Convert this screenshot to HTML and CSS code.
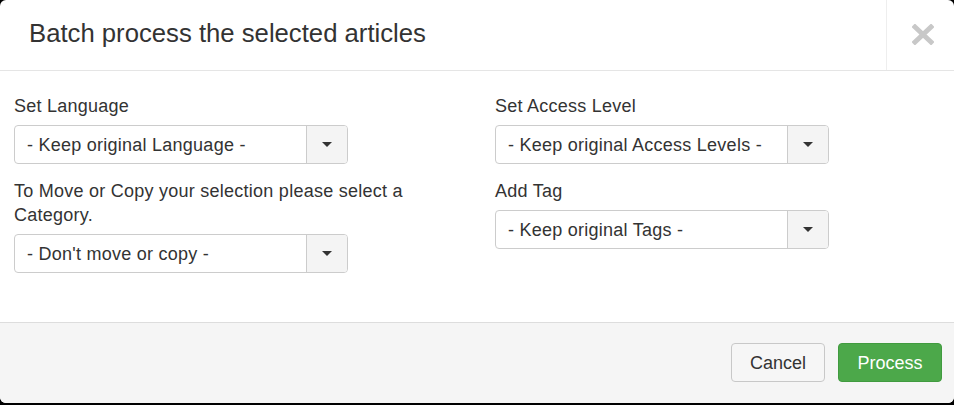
FILE: index.html
```html
<!DOCTYPE html>
<html>
<head>
<meta charset="utf-8">
<link rel="stylesheet" href="styles.css">
</head>
<body>
<div class="modal">
  <div class="modal-header">
    <h3 class="title">Batch process the selected articles</h3>
    <div class="close">
      <svg width="22" height="21" viewBox="0 0 22 21"><path d="M3 3 L19 18 M19 3 L3 18" stroke="#c8c8c8" stroke-width="5" stroke-linecap="square" fill="none"/></svg>
    </div>
  </div>
  <div class="modal-body">
    <div class="col">
      <div class="field">
        <label class="label">Set Language</label>
        <div class="select"><span class="select-text">- Keep original Language -</span><span class="select-arrow"><i class="caret"></i></span></div>
      </div>
      <div class="field">
        <label class="label">To Move or Copy your selection please select a Category.</label>
        <div class="select"><span class="select-text">- Don't move or copy -</span><span class="select-arrow"><i class="caret"></i></span></div>
      </div>
    </div>
    <div class="col">
      <div class="field">
        <label class="label">Set Access Level</label>
        <div class="select"><span class="select-text">- Keep original Access Levels -</span><span class="select-arrow"><i class="caret"></i></span></div>
      </div>
      <div class="field">
        <label class="label">Add Tag</label>
        <div class="select"><span class="select-text">- Keep original Tags -</span><span class="select-arrow"><i class="caret"></i></span></div>
      </div>
    </div>
  </div>
  <div class="modal-footer">
    <button class="btn btn-default">Cancel</button>
    <button class="btn btn-success">Process</button>
  </div>
</div>
</body>
</html>
```

FILE: styles.css
```css
html, body {
  margin: 0;
  padding: 0;
  background: #000;
  height: 405px;
  overflow: hidden;
}
body {
  font-family: "Liberation Sans", Arial, sans-serif;
  color: #333;
}
.modal {
  background: #fff;
  width: 954px;
  height: 403px;
  border-radius: 6px;
  display: flex;
  flex-direction: column;
  overflow: hidden;
}
.modal-header {
  height: 71px;
  box-sizing: border-box;
  border-bottom: 1px solid #e5e5e5;
  display: flex;
  align-items: stretch;
}
.title {
  flex: 1;
  margin: 0;
  padding: 0 0 2px 29px;
  font-size: 25.7px;
  font-weight: normal;
  line-height: 66px;
  color: #333;
}
.close {
  width: 68px;
  border-left: 1px solid #eeeeee;
  display: flex;
  align-items: flex-start;
  padding-left: 25px;
  padding-top: 24px;
  box-sizing: border-box;
}
.modal-body {
  flex: 1;
  padding: 22px 14px 0;
  display: grid;
  grid-template-columns: 481px 1fr;
}
.col {
  display: flex;
  flex-direction: column;
}
.field + .field {
  margin-top: 14px;
}
.label {
  display: block;
  font-size: 18px;
  letter-spacing: 0.25px;
  line-height: 24px;
  padding-top: 1px;
  margin-bottom: 7px;
  width: 420px;
}
.select {
  width: 334px;
  height: 39px;
  box-sizing: border-box;
  border: 1px solid #ccc;
  border-radius: 4px;
  display: flex;
  overflow: hidden;
  background: #fff;
}
.select-text {
  flex: 1;
  padding-left: 12px;
  font-size: 18px;
  letter-spacing: 0.25px;
  line-height: 39px;
  color: #333;
  white-space: nowrap;
}
.select-arrow {
  width: 40px;
  border-left: 1px solid #ccc;
  background: #f4f4f4;
  display: flex;
  align-items: center;
  justify-content: center;
}
.caret {
  width: 0;
  height: 0;
  border-left: 5px solid transparent;
  border-right: 5px solid transparent;
  border-top: 5px solid #333;
  margin-top: -1px;
}
.modal-footer {
  height: 81px;
  box-sizing: border-box;
  border-top: 1px solid #dddddd;
  background: #f5f5f5;
  display: flex;
  justify-content: flex-end;
  align-items: flex-start;
  padding: 20px 12px 0 0;
  gap: 13px;
}
.btn {
  height: 39px;
  box-sizing: border-box;
  border-radius: 4px;
  font-family: "Liberation Sans", Arial, sans-serif;
  font-size: 18px;
  padding: 2px 0 0;
  margin: 0;
  cursor: pointer;
}
.btn-default {
  background: #f6f6f6;
  border: 1px solid #c8c8c8;
  color: #333;
  width: 94px;
}
.btn-success {
  background: #4ca84a;
  border: 1px solid #419b3f;
  color: #fff;
  width: 104px;
}
```
